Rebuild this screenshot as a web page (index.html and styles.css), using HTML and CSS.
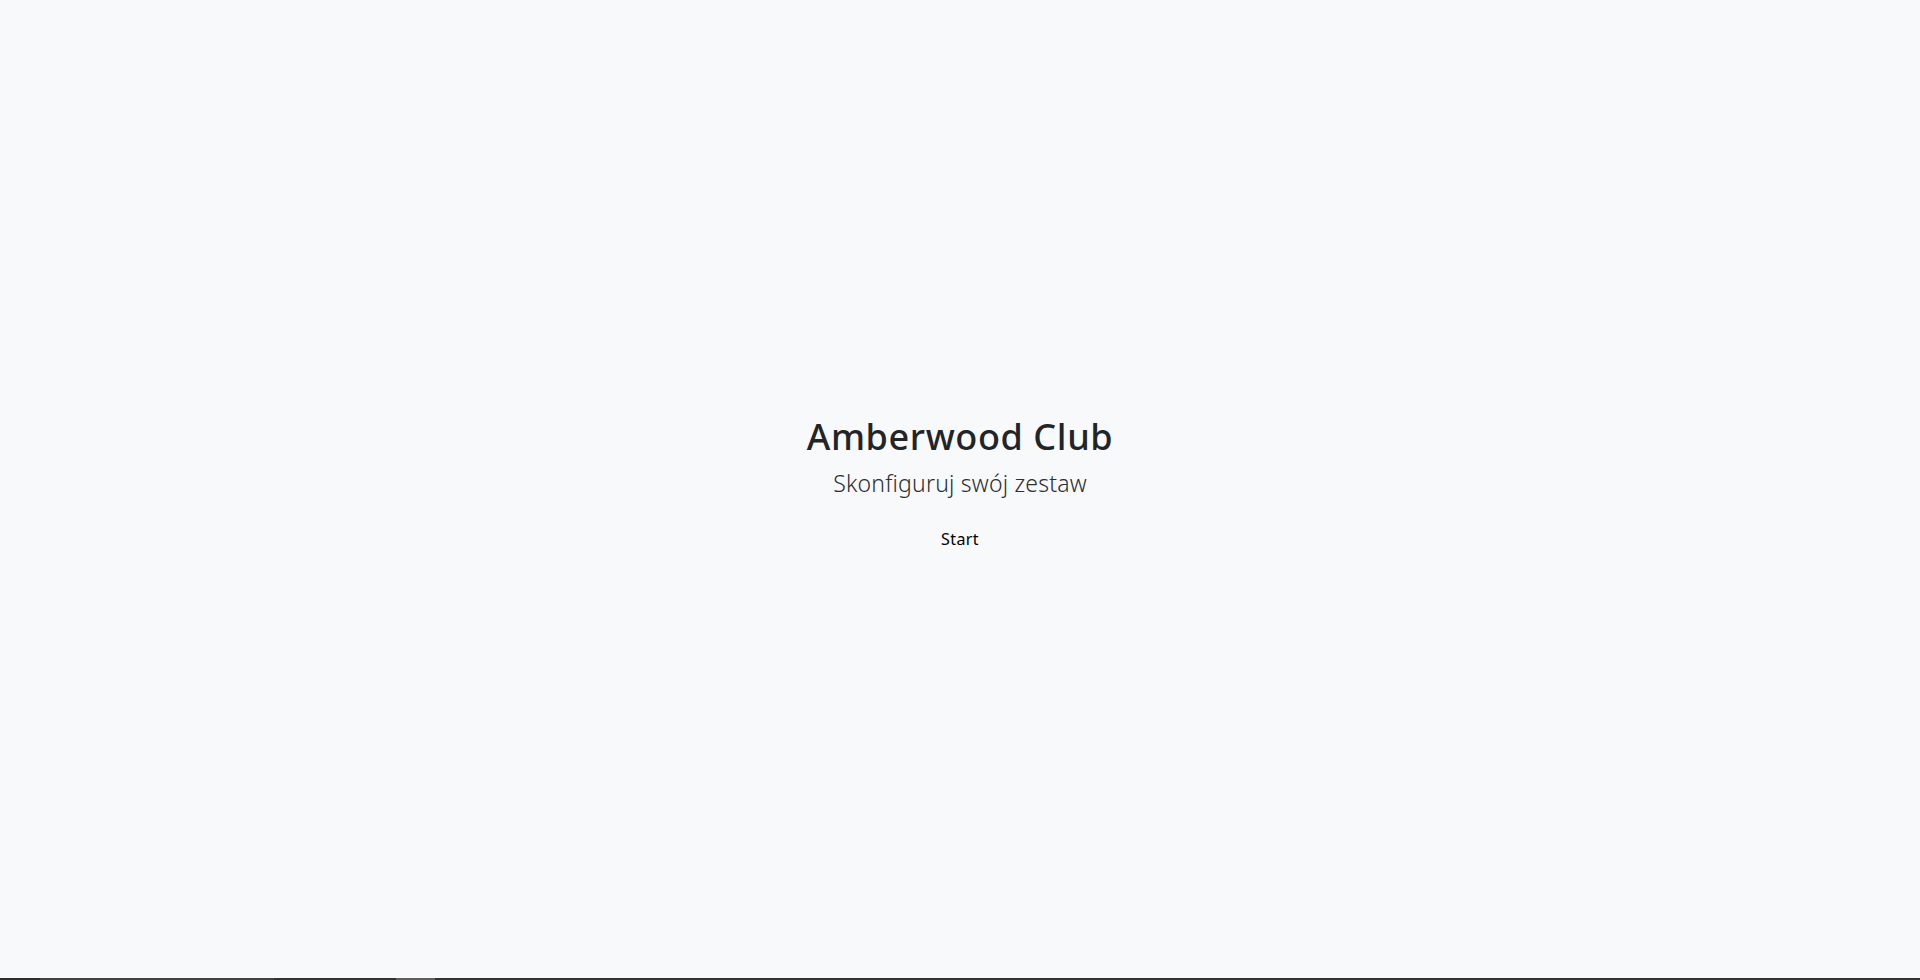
FILE: index.html
```html
<!DOCTYPE html>
<html lang="pl">
<head>
<meta charset="utf-8">
<title>Amberwood Club</title>
<link rel="stylesheet" href="styles.css">
</head>
<body>
<main class="hero">
  <h1 class="title">Amberwood Club</h1>
  <p class="lead">Skonfiguruj swój zestaw</p>
  <button class="start">Start</button>
</main>
<div class="bottom-bar">
  <span class="seg seg-a"></span>
  <span class="seg seg-b"></span>
  <span class="seg seg-c"></span>
  <span class="seg seg-d"></span>
  <span class="seg seg-e"></span>
</div>
</body>
</html>
```
FILE: styles.css
```css
html {
  margin: 0;
  padding: 0;
  overflow: hidden;
}
body {
  margin: 0;
  padding: 0;
  height: 100vh;
  background: #f8f9fa;
  font-family: "Noto Sans", "Open Sans", sans-serif;
  color: #212529;
  display: flex;
  flex-direction: column;
  overflow: hidden;
}
.hero {
  flex: 1;
  min-height: 0;
  display: flex;
  flex-direction: column;
  align-items: center;
  justify-content: center;
  padding-bottom: 7px;
}
.title {
  margin: 0;
  font-size: 36px;
  font-weight: 500;
  line-height: 1.2;
  letter-spacing: 0.6px;
  color: #212529;
}
.lead {
  margin: 8px 0 0;
  font-size: 23px;
  font-weight: 300;
  line-height: 1.4;
  color: #2b2f33;
  letter-spacing: 0.2px;
}
.start {
  margin-top: 23px;
  background: transparent;
  border: 0;
  padding: 6px 12px;
  font-family: inherit;
  font-size: 16px;
  font-weight: 400;
  color: #000;
  letter-spacing: 0.4px;
  cursor: pointer;
}
.bottom-bar {
  flex: none;
  height: 2px;
  display: flex;
  background: #333;
}
.seg { display: block; height: 2px; }
.seg-a { width: 40px; background: #2f2f2f; }
.seg-b { width: 234px; background: #444; }
.seg-c { width: 122px; background: #333; }
.seg-d { width: 39px; background: #5f5f5f; }
.seg-e { flex: 1; background: #333; }
```
